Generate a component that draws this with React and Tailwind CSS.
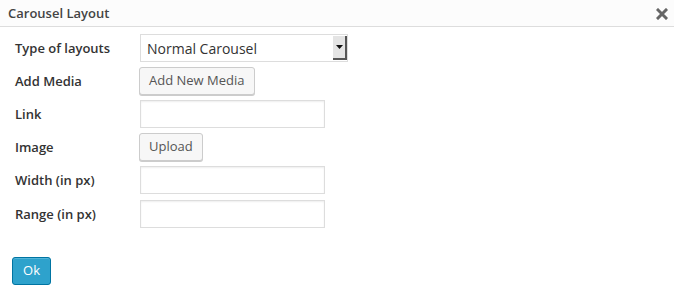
import React from 'react';

const Label = ({ children }) => (
  <span className="w-[125px] shrink-0 pt-px text-[13px] font-semibold text-[#333]">{children}</span>
);

const TextInput = () => (
  <input
    type="text"
    className="h-[28px] w-[185px] border border-[#ddd] bg-white shadow-[inset_0_1px_2px_rgba(0,0,0,0.07)] outline-none"
  />
);

const Button = ({ children }) => (
  <button className="-ml-px h-[28px] rounded-[3px] border border-[#ccc] bg-[#f7f7f7] px-[9px] text-[13px] text-[#555] shadow-[0_1px_0_#ccc]">
    {children}
  </button>
);

export default function App() {
  return (
    <div className="h-[296px] w-[674px] bg-white font-['Open_Sans',sans-serif]">
      <div className="flex h-[27px] items-center justify-between border-b border-[#ddd] bg-[#fcfcfc] pl-[8px] pr-[6px]">
        <span className="pt-px text-[13px] font-semibold text-[#444]">Carousel Layout</span>
        <svg width="12" height="12" viewBox="0 0 12 12" className="mt-px">
          <path d="M2 2 L10 10 M10 2 L2 10" stroke="#666" strokeWidth="3" strokeLinecap="square" />
        </svg>
      </div>

      <div className="flex flex-col gap-[5px] pl-[15px] pt-[7px]">
        <div className="flex h-[28px] items-center">
          <Label>Type of layouts</Label>
          <div className="flex h-[28px] w-[208px] items-stretch border border-[#ddd] bg-white">
            <span className="flex flex-1 items-center pl-[6px] text-[14px] text-[#333]">Normal Carousel</span>
            <div className="my-[1px] mr-0 flex w-[14px] items-center justify-center border-r-2 border-b-2 border-[#555] bg-[#e4e4e4]">
              <svg width="7" height="4" viewBox="0 0 7 4">
                <path d="M0 0 H7 L3.5 4 Z" fill="#111" />
              </svg>
            </div>
          </div>
        </div>

        <div className="flex h-[28px] items-center">
          <Label>Add Media</Label>
          <Button>Add New Media</Button>
        </div>

        <div className="flex h-[28px] items-center">
          <Label>Link</Label>
          <TextInput />
        </div>

        <div className="flex h-[28px] items-center">
          <Label>Image</Label>
          <Button>Upload</Button>
        </div>

        <div className="flex h-[28px] items-center">
          <Label>Width (in px)</Label>
          <TextInput />
        </div>

        <div className="mt-px flex h-[28px] items-center">
          <Label>Range (in px)</Label>
          <TextInput />
        </div>
      </div>

      <div className="pl-[12px] pt-[29px]">
        <button className="h-[28px] w-[39px] rounded-[3px] border border-[#0074a2] bg-[#2ea2cc] text-[13px] text-white shadow-[inset_0_1px_0_rgba(120,200,230,0.5)]">
          Ok
        </button>
      </div>
    </div>
  );
}
